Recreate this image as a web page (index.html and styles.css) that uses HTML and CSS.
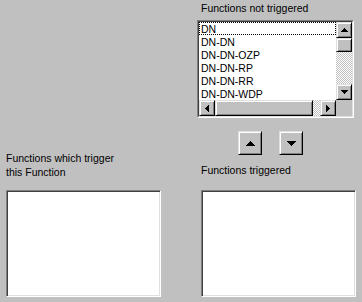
FILE: index.html
```html
<!DOCTYPE html>
<html>
<head>
<meta charset="utf-8">
<link rel="stylesheet" href="styles.css">
</head>
<body>
<div class="panel">
  <div class="col col-left">
    <div class="label label-wrap">Functions which trigger<br>this Function</div>
    <div class="box"></div>
  </div>
  <div class="col col-right">
    <div class="label">Functions not triggered</div>
    <div class="listbox">
      <div class="listbox-inner">
        <ul class="items">
          <li class="item focus">DN</li>
          <li class="item">DN-DN</li>
          <li class="item">DN-DN-OZP</li>
          <li class="item">DN-DN-RP</li>
          <li class="item">DN-DN-RR</li>
          <li class="item">DN-DN-WDP</li>
        </ul>
        <div class="vscroll">
          <div class="raised sbtn"><svg width="7" height="4" viewBox="0 0 7 4"><rect x="3" y="0" width="1" height="1"/><rect x="2" y="1" width="3" height="1"/><rect x="1" y="2" width="5" height="1"/><rect x="0" y="3" width="7" height="1"/></svg></div>
          <div class="raised"></div>
          <div class="track"></div>
          <div class="raised sbtn"><svg width="7" height="4" viewBox="0 0 7 4"><rect x="0" y="0" width="7" height="1"/><rect x="1" y="1" width="5" height="1"/><rect x="2" y="2" width="3" height="1"/><rect x="3" y="3" width="1" height="1"/></svg></div>
        </div>
        <div class="hscroll">
          <div class="raised sbtn"><svg width="4" height="7" viewBox="0 0 4 7"><rect x="3" y="0" width="1" height="7"/><rect x="2" y="1" width="1" height="5"/><rect x="1" y="2" width="1" height="3"/><rect x="0" y="3" width="1" height="1"/></svg></div>
          <div class="raised"></div>
          <div class="track"></div>
          <div class="raised sbtn"><svg width="4" height="7" viewBox="0 0 4 7"><rect x="0" y="0" width="1" height="7"/><rect x="1" y="1" width="1" height="5"/><rect x="2" y="2" width="1" height="3"/><rect x="3" y="3" width="1" height="1"/></svg></div>
        </div>
        <div class="corner"></div>
      </div>
    </div>
    <div class="movers">
      <button class="raised mbtn" type="button"><svg width="9" height="5" viewBox="0 0 9 5"><rect x="4" y="0" width="1" height="1"/><rect x="3" y="1" width="3" height="1"/><rect x="2" y="2" width="5" height="1"/><rect x="1" y="3" width="7" height="1"/><rect x="0" y="4" width="9" height="1"/></svg></button>
      <button class="raised mbtn" type="button"><svg width="9" height="5" viewBox="0 0 9 5"><rect x="0" y="0" width="9" height="1"/><rect x="1" y="1" width="7" height="1"/><rect x="2" y="2" width="5" height="1"/><rect x="3" y="3" width="3" height="1"/><rect x="4" y="4" width="1" height="1"/></svg></button>
    </div>
    <div class="label second">Functions triggered</div>
    <div class="box"></div>
  </div>
</div>
</body>
</html>
```

FILE: styles.css
```css
* {
  box-sizing: border-box;
}

html, body {
  margin: 0;
  background: #c0c0c0;
}

body {
  font-family: "Liberation Sans", Arial, sans-serif;
  font-size: 10.5px;
  color: #000;
}

.panel {
  display: flex;
  width: 362px;
  height: 302px;
  padding-left: 6px;
}

.col {
  display: flex;
  flex-direction: column;
}

.col-left {
  width: 155px;
  padding-top: 151px;
}

.col-right {
  width: 159px;
  margin-left: 36px;
  padding-top: 2px;
}

.label {
  line-height: 13px;
  white-space: nowrap;
}

.label-wrap {
  line-height: 14px;
}

.col-right .label {
  padding-left: 4px;
}

.col-right .label.second {
  margin-top: 9px;
}

.box {
  width: 155px;
  height: 107px;
  background: #fff;
  border: 1px solid;
  border-color: #808080 #fff #fff #808080;
  box-shadow: inset 1px 1px #404040, inset -1px -1px #dfdfdf;
}

.col-left .box {
  margin-top: 11px;
}

.col-right .box {
  margin-top: 13px;
  margin-left: 4px;
}

.listbox {
  margin-top: 5px;
  width: 157px;
  height: 98px;
  border: 1px solid;
  border-color: #808080 #fff #fff #808080;
}

.listbox-inner {
  height: 100%;
  border: 1px solid;
  border-color: #404040 #dfdfdf #dfdfdf #404040;
  display: grid;
  grid-template-columns: 137px 16px;
  grid-template-rows: 78px 16px;
}

.items {
  list-style: none;
  margin: 0;
  padding: 0;
  background: #fff;
  overflow: hidden;
}

.item {
  height: 13px;
  padding: 1px 0 0 2px;
  line-height: 12px;
  white-space: nowrap;
}

.item.focus {
  outline: 1px dotted #000;
  outline-offset: -1px;
}

.vscroll {
  display: grid;
  grid-template-rows: 16px 14px 1fr 16px;
}

.hscroll {
  display: grid;
  grid-template-columns: 16px 98px 1fr 16px;
}

.raised {
  background: #c0c0c0;
  border: 1px solid;
  border-color: #dfdfdf #000 #000 #dfdfdf;
  box-shadow: inset 1px 1px #fff, inset -1px -1px #808080;
  display: flex;
  align-items: center;
  justify-content: center;
  padding: 0;
  margin: 0;
}

.raised svg {
  display: block;
  fill: #000;
  shape-rendering: crispEdges;
}

.track {
  background: repeating-conic-gradient(#fff 0 25%, #c0c0c0 0 50%) 0 0 / 2px 2px;
}

.corner {
  background: #c0c0c0;
}

.movers {
  margin-top: 13px;
  padding-left: 41px;
  display: flex;
  gap: 17px;
}

.mbtn {
  width: 24px;
  height: 24px;
}
```
